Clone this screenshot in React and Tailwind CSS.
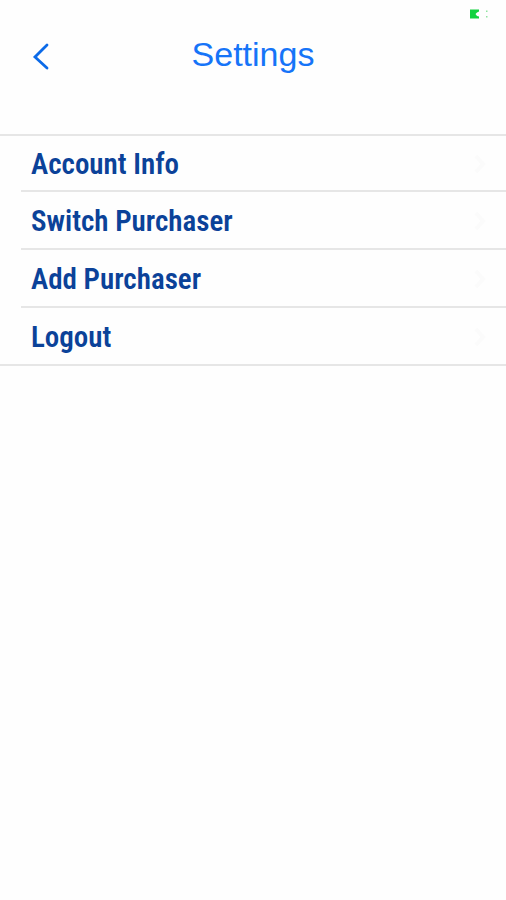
import React from "react";

const items = ["Account Info", "Switch Purchaser", "Add Purchaser", "Logout"];

function StatusBar() {
  return (
    <div className="flex h-7 items-center justify-end pr-[18px]">
      <svg width="18" height="10" viewBox="0 0 18 10" aria-hidden="true">
        <path d="M0 0.5H9V2.5L7 3.5L5.5 5L7 7L9 7.5V9.5H0Z" fill="#12d23f" />
        <path d="M16 1.5H17.5V3H16ZM16 7H17.5V8.5H16Z" fill="#8fe3a0" />
      </svg>
    </div>
  );
}

function Header() {
  return (
    <header className="grid h-[106px] grid-cols-[80px_1fr_80px] items-start">
      <button type="button" aria-label="Back" className="flex h-14 items-center pl-8">
        <svg width="18" height="28" viewBox="0 0 18 28" fill="none" aria-hidden="true">
          <path d="M15 3L3 15L15 26" stroke="#0b6ae8" strokeWidth="2.8" strokeLinecap="round" />
        </svg>
      </button>
      <h1 className="pt-1 text-center font-['Liberation_Sans',Arial,sans-serif] text-[34px] leading-[44px] text-[#1674f8]">
        Settings
      </h1>
    </header>
  );
}

function SettingsRow({ label }) {
  return (
    <li className="group border-t-2 border-[#e6e6e6] first:border-t-0">
      <button type="button" className="flex h-14 w-full items-center justify-between pl-[10px] pr-5 pt-0.5 text-left group-first:h-[54px]">
        <span className="font-['Roboto_Condensed','Open_Sans_Condensed',Roboto,sans-serif] text-[29px] font-semibold leading-8 text-[#0b4299]">
          {label}
        </span>
        <svg width="12" height="20" viewBox="0 0 12 20" fill="none" aria-hidden="true">
          <path d="M2 2L9 10L2 18" stroke="#fbfbfb" strokeWidth="4" />
        </svg>
      </button>
    </li>
  );
}

export default function App() {
  return (
    <div className="min-h-screen bg-[#fefefe]">
      <StatusBar />
      <Header />
      <main>
        <ul className="border-y-2 border-[#e6e6e6] pl-[21px]">
          {items.map((label) => (
            <SettingsRow key={label} label={label} />
          ))}
        </ul>
      </main>
    </div>
  );
}
